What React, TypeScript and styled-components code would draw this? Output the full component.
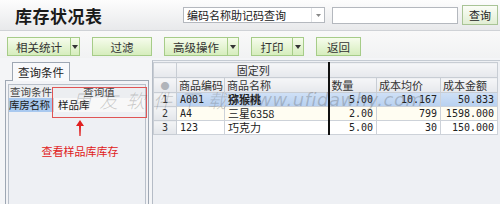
import React from 'react';
import styled, { createGlobalStyle } from 'styled-components';

const GlobalStyle = createGlobalStyle`
  html, body {
    margin: 0;
    padding: 0;
  }
  body {
    width: 500px;
    height: 204px;
    overflow: hidden;
    background: #f4f5f7;
    font-family: "Noto Sans CJK SC", "Liberation Sans", sans-serif;
    color: #222;
  }
`;

const Page = styled.div`
  position: relative;
  display: flex;
  flex-direction: column;
  width: 500px;
  height: 204px;
  overflow: hidden;
`;

const TitleBar = styled.div`
  display: flex;
  align-items: center;
  height: 30px;
  padding-left: 15px;
  background: linear-gradient(#fdfdfd, #e8e9eb);
  border-bottom: 1px solid #cfd2d6;
`;

const Title = styled.div`
  flex: 0 0 168px;
  font-size: 17px;
  font-weight: 700;
  letter-spacing: 0.5px;
  color: #1a1a1a;
`;

const Select = styled.div`
  display: flex;
  align-items: center;
  justify-content: space-between;
  width: 142px;
  height: 16px;
  padding-left: 3px;
  background: #fff;
  border: 1px solid #b4b8be;
  font-size: 11px;
  box-sizing: border-box;
`;

const SelectArrow = styled.span`
  width: 12px;
  height: 14px;
  display: flex;
  align-items: center;
  justify-content: center;
  border-left: 1px solid #e2e4e7;
`;

const SearchInput = styled.div`
  width: 126px;
  height: 17px;
  margin-left: 7px;
  background: #fff;
  border: 1px solid #b4b8be;
  box-sizing: border-box;
`;

const QueryButton = styled.div`
  display: flex;
  align-items: center;
  justify-content: center;
  width: 36px;
  height: 20px;
  margin-left: 4px;
  box-sizing: border-box;
  border: 1px solid #a9c496;
  background: linear-gradient(#fbfdf7, #e1eed4);
  font-size: 11px;
`;

const Toolbar = styled.div`
  display: flex;
  gap: 12px;
  height: 27px;
  padding: 6px 0 0 7px;
  box-sizing: border-box;
  background: linear-gradient(#f9f9f9, #f1f2f3);
`;

const ButtonGroup = styled.div`
  display: flex;
  height: 19px;
`;

const GreenButton = styled.div<{ $w: number; $split?: boolean }>`
  display: flex;
  align-items: center;
  justify-content: center;
  width: ${({ $w }) => $w}px;
  height: 19px;
  box-sizing: border-box;
  border: 1px solid #a6cc88;
  border-right: ${({ $split }) => ($split ? 'none' : '1px solid #a6cc88')};
  background: linear-gradient(#f6fcec, #d6edbd);
  font-size: 11.5px;
  color: #333;
`;

const ArrowPart = styled.div<{ $w: number }>`
  display: flex;
  align-items: center;
  justify-content: center;
  width: ${({ $w }) => $w}px;
  height: 19px;
  box-sizing: border-box;
  border: 1px solid #a6cc88;
  background: linear-gradient(#f6fcec, #d6edbd);
`;

const Main = styled.div`
  display: flex;
  gap: 3px;
  flex: 1;
  padding: 2px 0 0 5px;
  min-height: 0;
`;

const LeftPanel = styled.div`
  position: relative;
  display: flex;
  flex-direction: column;
  width: 144px;
  flex: 0 0 144px;
`;

const TabRow = styled.div`
  display: flex;
  align-items: flex-end;
  height: 20px;
  padding-left: 7px;
`;

const Tab = styled.div`
  width: 58px;
  height: 19px;
  box-sizing: border-box;
  display: flex;
  align-items: center;
  justify-content: center;
  border: 1px solid #9ea7b3;
  border-bottom: none;
  background: #f8f9fb;
  font-size: 11.5px;
  margin-bottom: -1px;
  position: relative;
  z-index: 1;
`;

const TabBody = styled.div`
  flex: 1;
  border: 1px solid #9ea7b3;
  border-bottom: none;
  background: #f2f3f6;
  padding: 3px 2px 0 2px;
  display: flex;
`;

const InnerBox = styled.div`
  flex: 1;
  border: 1px solid #b9c0ca;
  border-bottom: none;
  background: #eef0f4;
  display: flex;
  flex-direction: column;
`;

const CondGrid = styled.div`
  display: grid;
  grid-template-columns: 44px 1fr;
  font-size: 10.5px;
  white-space: nowrap;
`;

const CondHead = styled.div`
  height: 13px;
  line-height: 13px;
  text-align: center;
  color: #444;
  background: #eceef1;
  overflow: visible;
`;

const CondName = styled.div`
  background: #a9c9ef;
  height: 14px;
  line-height: 14px;
  color: #1a1a1a;
  letter-spacing: -0.3px;
`;

const CondValue = styled.div`
  background: #f8f8f8;
  padding-left: 4px;
  height: 14px;
  line-height: 14px;
  border-left: 1px solid #cfd4da;
`;

const HighlightBox = styled.div`
  position: absolute;
  left: 47px;
  top: 27px;
  width: 95px;
  height: 31px;
  border: 1px solid #e05555;
  box-sizing: border-box;
`;

const Annotation = styled.div`
  display: flex;
  flex-direction: column;
  align-items: center;
  align-self: flex-start;
  width: 80px;
  margin: 8px 0 0 31px;
`;

const NoteText = styled.div`
  margin-top: 9px;
  font-size: 11px;
  line-height: 12px;
  color: #e02020;
  white-space: nowrap;
`;

const RightPanel = styled.div`
  flex: 1;
  border-left: 1px solid #b5bcc6;
  border-top: 1px solid #c5cbd3;
  background: #eef0f4;
  padding-top: 1px;
`;

const Grid = styled.table`
  border-collapse: collapse;
  table-layout: fixed;
  width: 344px;
  font-size: 11px;
`;

const HeadCell = styled.th<{ $thick?: boolean; $center?: boolean }>`
  height: 14px;
  padding: 0 0 0 2px;
  font-weight: 400;
  text-align: ${({ $center }) => ($center ? 'center' : 'left')};
  color: #333;
  background: linear-gradient(#f5f6f8, #e6e8ec);
  border: 1px solid #c8cdd4;
  border-right: ${({ $thick }) => ($thick ? '2px solid #111' : '1px solid #c8cdd4')};
  white-space: nowrap;
  overflow: hidden;
  line-height: 13px;
`;

const DotCell = styled(HeadCell)`
  padding: 0;
  text-align: center;
  color: #b0b4ba;
  font-size: 9px;
`;

const Row = styled.tr<{ $bg: string }>`
  background: ${({ $bg }) => $bg};
`;

const Cell = styled.td<{ $num?: boolean; $mono?: boolean; $thick?: boolean; $bold?: boolean }>`
  height: 13px;
  padding: 0 3px;
  line-height: 13px;
  border: 1px solid #cdd2d9;
  border-right: ${({ $thick }) => ($thick ? '2px solid #111' : '1px solid #cdd2d9')};
  text-align: ${({ $num }) => ($num ? 'right' : 'left')};
  font-family: ${({ $num, $mono }) =>
    $num || $mono ? '"DejaVu Sans Mono", monospace' : '"Noto Sans CJK SC", "Liberation Sans", sans-serif'};
  font-size: ${({ $num, $mono }) => ($num || $mono ? '10px' : '11px')};
  font-weight: ${({ $bold }) => ($bold ? 700 : 400)};
  white-space: nowrap;
  overflow: hidden;
  color: #222;
`;

const IndexCell = styled.td`
  height: 13px;
  padding: 0;
  text-align: center;
  line-height: 13px;
  font-size: 10px;
  font-family: "DejaVu Sans Mono", monospace;
  background: linear-gradient(#f3f4f6, #e3e6ea);
  border: 1px solid #c8cdd4;
  color: #333;
`;

const Watermark = styled.div`
  position: absolute;
  left: 72px;
  top: 86px;
  display: flex;
  align-items: center;
  gap: 8px;
  font-size: 19px;
  font-style: italic;
  color: rgba(80, 80, 80, 0.28);
  pointer-events: none;
  white-space: nowrap;
`;

const WatermarkCn = styled.span`
  letter-spacing: 8px;
  font-family: "Noto Sans CJK SC", sans-serif;
  font-weight: 300;
`;

const WatermarkUrl = styled.span`
  font-family: "DejaVu Sans", sans-serif;
  font-size: 18px;
  letter-spacing: 0.5px;
`;

const DownTri = () => (
  <svg width="6" height="4" viewBox="0 0 6 4">
    <path d="M0 0 L6 0 L3 4 Z" fill="#333" />
  </svg>
);

const rows = [
  { no: '1', code: 'A001', name: '猕猴桃', qty: '5.00', price: '10.167', amount: '50.833', bg: 'linear-gradient(#cfe0f6, #b7d0f0)', bold: true },
  { no: '2', code: 'A4', name: '三星6358', qty: '2.00', price: '799', amount: '1598.000', bg: '#fffdf2' },
  { no: '3', code: '123', name: '巧克力', qty: '5.00', price: '30', amount: '150.000', bg: '#ffffff' },
];

export default function App() {
  return (
    <Page>
      <GlobalStyle />
      <TitleBar>
        <Title>库存状况表</Title>
        <Select>
          编码名称助记码查询
          <SelectArrow>
            <svg width="5" height="3" viewBox="0 0 5 3">
              <path d="M0 0 L5 0 L2.5 3 Z" fill="#888" />
            </svg>
          </SelectArrow>
        </Select>
        <SearchInput />
        <QueryButton>查询</QueryButton>
      </TitleBar>

      <Toolbar>
        <ButtonGroup>
          <GreenButton $w={63} $split>相关统计</GreenButton>
          <ArrowPart $w={10}><DownTri /></ArrowPart>
        </ButtonGroup>
        <ButtonGroup>
          <GreenButton $w={60}>过滤</GreenButton>
        </ButtonGroup>
        <ButtonGroup>
          <GreenButton $w={63} $split>高级操作</GreenButton>
          <ArrowPart $w={12}><DownTri /></ArrowPart>
        </ButtonGroup>
        <ButtonGroup>
          <GreenButton $w={41} $split>打印</GreenButton>
          <ArrowPart $w={12}><DownTri /></ArrowPart>
        </ButtonGroup>
        <ButtonGroup>
          <GreenButton $w={45}>返回</GreenButton>
        </ButtonGroup>
      </Toolbar>

      <Main>
        <LeftPanel>
          <TabRow>
            <Tab>查询条件</Tab>
          </TabRow>
          <TabBody>
            <InnerBox>
              <CondGrid>
                <CondHead>查询条件</CondHead>
                <CondHead>查询值</CondHead>
                <CondName>库房名称</CondName>
                <CondValue>样品库</CondValue>
              </CondGrid>
              <Annotation>
                <svg width="8" height="16" viewBox="0 0 8 16">
                  <path d="M4 0 L8 6 L5 6 L4.6 16 L3.4 16 L3 6 L0 6 Z" fill="#e02020" />
                </svg>
                <NoteText>查看样品库库存</NoteText>
              </Annotation>
            </InnerBox>
          </TabBody>
          <HighlightBox />
        </LeftPanel>

        <RightPanel>
          <Grid>
            <colgroup>
              <col style={{ width: 23 }} />
              <col style={{ width: 48 }} />
              <col style={{ width: 104 }} />
              <col style={{ width: 48 }} />
              <col style={{ width: 64 }} />
              <col style={{ width: 57 }} />
            </colgroup>
            <thead>
              <tr>
                <HeadCell />
                <HeadCell colSpan={2} $thick $center>固定列</HeadCell>
                <HeadCell colSpan={3} />
              </tr>
              <tr>
                <DotCell>●</DotCell>
                <HeadCell>商品编码</HeadCell>
                <HeadCell $thick>商品名称</HeadCell>
                <HeadCell>数量</HeadCell>
                <HeadCell>成本均价</HeadCell>
                <HeadCell>成本金额</HeadCell>
              </tr>
            </thead>
            <tbody>
              {rows.map((r) => (
                <Row key={r.no} $bg={r.bg}>
                  <IndexCell>{r.no}</IndexCell>
                  <Cell $mono>{r.code}</Cell>
                  <Cell $thick $bold={r.bold}>{r.name}</Cell>
                  <Cell $num>{r.qty}</Cell>
                  <Cell $num>{r.price}</Cell>
                  <Cell $num>{r.amount}</Cell>
                </Row>
              ))}
            </tbody>
          </Grid>
        </RightPanel>
      </Main>

      <Watermark>
        <WatermarkCn>用友软件下载</WatermarkCn>
        <WatermarkUrl>www.ufidawhy.com</WatermarkUrl>
      </Watermark>
    </Page>
  );
}
